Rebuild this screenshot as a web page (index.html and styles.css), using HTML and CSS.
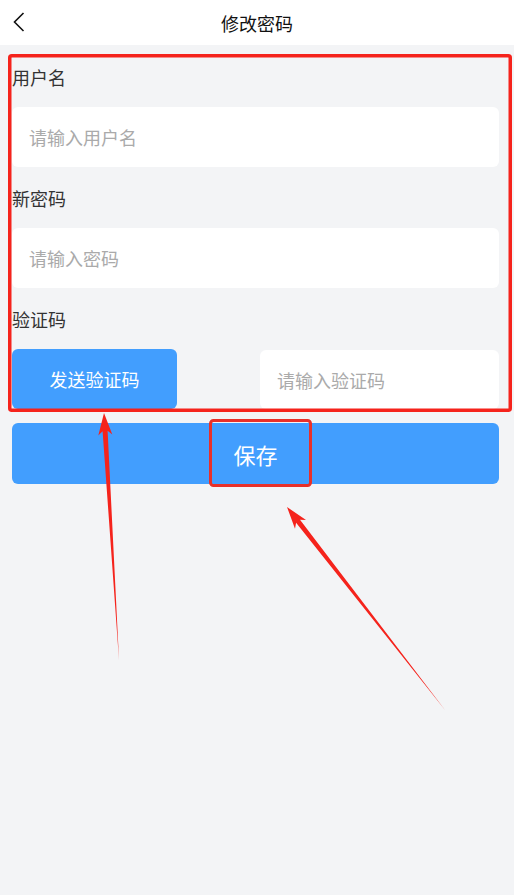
FILE: index.html
```html
<!DOCTYPE html>
<html lang="zh-CN">
<head>
	<meta charset="UTF-8">
	<meta name="viewport" content="width=device-width,user-scalable=no">
	<title>修改密码</title>
	<link rel="stylesheet" href="styles.css">
</head>
<body>
	<header class="bar">
		<a class="back" href="javascript:;">
			<svg width="12" height="20" viewBox="0 0 12 20"><path d="M10.5 1 L1.5 10 L10.5 19" fill="none" stroke="#111" stroke-width="1.6"/></svg>
		</a>
		<h1>修改密码</h1>
	</header>

	<main class="page">
		<form class="form">
			<label class="label">用户名</label>
			<input class="field" type="text" placeholder="请输入用户名">

			<label class="label">新密码</label>
			<input class="field" type="password" placeholder="请输入密码">

			<label class="label">验证码</label>
			<div class="code-row">
				<button class="send" type="button">发送验证码</button>
				<input class="field code" type="text" placeholder="请输入验证码">
			</div>
		</form>
		<button class="save" type="button">保存</button>
	</main>

	<!-- 标注 -->
	<svg class="marks" width="514" height="895" viewBox="0 0 514 895">
		<rect x="9.75" y="55.75" width="500.5" height="354.5" rx="2" fill="none" stroke="#f5231c" stroke-width="3.5"/>
		<rect x="210.5" y="420.5" width="100" height="65" rx="3" fill="none" stroke="#e8302a" stroke-width="3"/>
		<polygon fill="#f5231c" points="104,413 112.3,434.6 107.6,430.8 119,660 102.6,431.2 98.3,435.4"/>
		<polygon fill="#f5231c" points="287,507 306,520.1 300,519.7 445,710 296.1,522.7 295,528.7"/>
	</svg>
</body>
</html>
```

FILE: styles.css
```css
* {
	box-sizing: border-box;
}

body {
	margin: 0;
	min-height: 895px;
	background: #f3f4f6;
	font-family: "Noto Sans CJK SC", "Noto Sans", sans-serif;
	color: #333;
	position: relative;
}

.bar {
	height: 45px;
	background: #fff;
	display: flex;
	align-items: center;
	justify-content: center;
	position: relative;
}

.bar h1 {
	margin: 0;
	font-size: 18px;
	font-weight: normal;
	color: #111;
}

.back {
	position: absolute;
	left: 13px;
	top: 12px;
	display: block;
	line-height: 0;
}

.page {
	padding: 12px 15px 0 12px;
}

.form {
	display: flex;
	flex-direction: column;
}

.label {
	height: 40px;
	line-height: 40px;
	font-size: 18px;
	color: #333;
	margin-bottom: 10px;
}

.field {
	height: 60px;
	border: 0;
	border-radius: 6px;
	background: #fff;
	padding: 0 17px;
	font-family: inherit;
	font-size: 18px;
	color: #333;
	outline: none;
	margin-bottom: 11px;
}

.field::placeholder {
	color: #aaa;
}

.code-row {
	display: flex;
	justify-content: space-between;
	height: 60px;
}

.code-row .field {
	width: 239px;
	margin: 1px 0 0;
	height: 59px;
}

.send {
	width: 165px;
	height: 60px;
	border: 0;
	border-radius: 6px;
	background: #429efe;
	color: #fff;
	font-family: inherit;
	font-size: 18px;
}

.save {
	display: block;
	width: 100%;
	height: 61px;
	margin-top: 14px;
	border: 0;
	border-radius: 6px;
	background: #429efe;
	color: #fff;
	font-family: inherit;
	font-size: 22px;
}

.marks {
	position: absolute;
	left: 0;
	top: 0;
	pointer-events: none;
}
```
